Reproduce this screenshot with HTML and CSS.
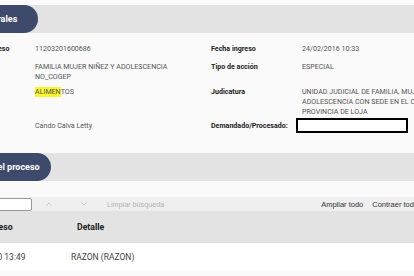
FILE: index.html
```html
<!DOCTYPE html>
<html lang="es">
<head>
<meta charset="utf-8">
<title>Proceso</title>
<link rel="stylesheet" href="styles.css">
</head>
<body>
<div class="page">
  <div class="sec-head sec-head--first">
    <div class="pill pill--general">Datos generales</div>
  </div>

  <div class="info">
    <div class="lbl">No. proceso</div>
    <div class="val">11203201600686</div>
    <div class="lbl">Fecha ingreso</div>
    <div class="val">24/02/2016 10:33</div>

    <div class="lbl">Materia</div>
    <div class="val val--narrow">FAMILIA MUJER NIÑEZ Y ADOLESCENCIA NO_COGEP</div>
    <div class="lbl">Tipo de acción</div>
    <div class="val">ESPECIAL</div>

    <div class="lbl">Asunto</div>
    <div class="val"><span class="hl">ALIMEN</span>TOS</div>
    <div class="lbl">Judicatura</div>
    <div class="val">UNIDAD JUDICIAL DE FAMILIA, MUJER, NIÑEZ Y ADOLESCENCIA CON SEDE EN EL CANTÓN LOJA, PROVINCIA DE LOJA</div>

    <div class="lbl">Actor</div>
    <div class="val val--mid">Cando Calva Letty</div>
    <div class="demand">
      <span class="lbl">Demandado/Procesado:</span>
      <span class="box"></span>
    </div>
  </div>

  <div class="sec-head">
    <div class="pill pill--acts">Actuaciones del proceso</div>
  </div>

  <div class="toolbar">
    <span class="search"></span>
    <span class="chev">
      <svg width="6" height="4" viewBox="0 0 6 4"><path d="M0.5 3.5 L3 1 L5.5 3.5" fill="none" stroke="#c4c4c4" stroke-width="0.9"/></svg>
    </span>
    <span class="chev chev--down">
      <svg width="6" height="4" viewBox="0 0 6 4"><path d="M0.5 0.5 L3 3 L5.5 0.5" fill="none" stroke="#c4c4c4" stroke-width="0.9"/></svg>
    </span>
    <span class="clear">Limpiar búsqueda</span>
    <span class="tool-links">
      <span class="link">Ampliar todo</span>
      <span class="link">Contraer todo</span>
    </span>
  </div>

  <div class="thead">
    <div class="th">Fecha de ingreso</div>
    <div class="th">Detalle</div>
  </div>
  <div class="trow">
    <div class="td">17/01/2020 13:49</div>
    <div class="td">RAZON (RAZON)</div>
  </div>
</div>
</body>
</html>
```

FILE: styles.css
```css
html, body {
  margin: 0;
  padding: 0;
}
body {
  background: #fafafa;
  overflow: hidden;
  font-family: Roboto, "Noto Sans", sans-serif;
}
.page {
  margin-left: -80px;
  width: 600px;
  padding-top: 5px;
}
.sec-head {
  height: 28px;
  background: #e3e3e3;
  display: flex;
  margin-top: 20px;
}
.sec-head--first {
  margin-top: 0;
}
.pill {
  background: #3d4a6b;
  color: #fff;
  font-weight: 700;
  font-size: 9px;
  border-radius: 14px;
  display: flex;
  align-items: center;
}
.pill--general {
  padding: 0 21px 0 32px;
}
.pill--acts {
  padding: 0 11px 0 20px;
}
.info {
  display: grid;
  grid-template-columns: 64px 176px 91px 185px;
  grid-template-rows: 18px 25px 31px 15px;
  padding: 11px 0 0 51px;
  font-size: 7.1px;
  line-height: 10px;
  align-items: start;
}
.lbl {
  font-weight: 700;
  color: #222;
}
.val {
  color: #555;
}
.val--narrow {
  padding-right: 30px;
}
.val--mid {
  align-self: center;
}
.hl {
  background: #f7f52c;
  display: inline-block;
}
.demand {
  grid-column: 3 / span 2;
  display: flex;
  align-items: center;
  gap: 8px;
}
.box {
  width: 108px;
  height: 11px;
  border: 2px solid #000;
  background: #fff;
}
.toolbar {
  margin-top: 16px;
  height: 14px;
  background: #efefef;
  display: flex;
  align-items: center;
  font-family: "Liberation Sans", Arial, sans-serif;
  font-size: 7.2px;
}
.search {
  margin-left: 40px;
  width: 70px;
  height: 11px;
  border: 1px solid #999;
  border-radius: 2px;
  background: #fff;
}
.chev {
  display: flex;
  margin-left: 14px;
}
.chev--down {
  margin-left: 29px;
}
.clear {
  color: #b0b0b0;
  margin-left: 20px;
}
.tool-links {
  margin-left: 157px;
  display: flex;
  gap: 9px;
  color: #333;
  font-size: 7.5px;
}
.thead {
  height: 32px;
  background: #e3e3e3;
  display: grid;
  grid-template-columns: 131px 1fr;
  align-items: center;
  padding-left: 26px;
}
.th {
  font-weight: 700;
  font-size: 8.7px;
  color: #222;
}
.trow {
  height: 28px;
  background: #fff;
  display: grid;
  grid-template-columns: 114px 1fr;
  align-items: center;
  padding-left: 37px;
}
.td {
  font-size: 8.5px;
  color: #444;
}
```
